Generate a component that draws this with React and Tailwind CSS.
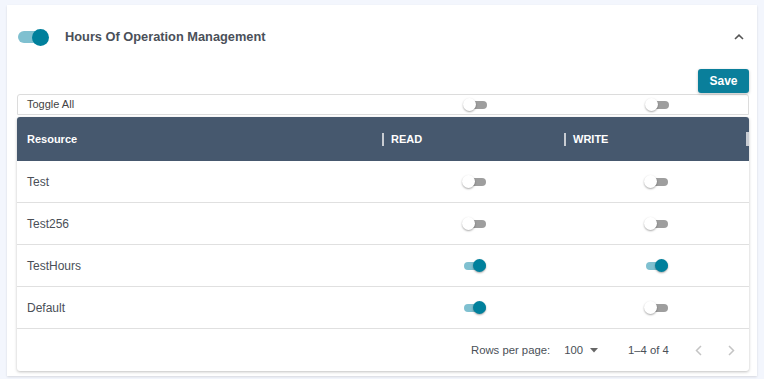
import React, { useState } from "react";

const rows = [
  { name: "Test", read: false, write: false },
  { name: "Test256", read: false, write: false },
  { name: "TestHours", read: true, write: true },
  { name: "Default", read: true, write: false },
];

function MiniSwitch({ on }) {
  return (
    <span className="relative inline-block w-[24px] h-[13px]">
      <span
        className={`absolute left-[2px] right-0 top-[2.5px] h-[8px] rounded-full ${
          on ? "bg-[#7fc0d0]" : "bg-[#9e9e9e]"
        }`}
      ></span>
      <span
        className={`absolute top-0 w-[13px] h-[13px] rounded-full shadow-[0_1px_2px_rgba(0,0,0,0.35)] ${
          on ? "right-0 bg-[#00809c]" : "left-0 bg-white"
        }`}
      ></span>
    </span>
  );
}

export default function App() {
  const [enabled] = useState(true);

  return (
    <div className="w-[764px] h-[379px] bg-[#f3f6fd] pt-[5px] pl-[7px] font-['Liberation_Sans',Arial,sans-serif]">
      <div className="w-[750px] h-[371px] bg-white shadow-[0_1px_2px_rgba(0,0,0,0.12)] pl-[10px] pr-[8px] pb-[5px]">
        {/* Header */}
        <div className="flex items-center h-[64px]">
          <span className="relative inline-block w-[31px] h-[17px] ml-[1px]">
            <span className="absolute left-0 right-[3px] top-[2.5px] h-[12px] rounded-full bg-[#7fc0d0]"></span>
            <span className="absolute right-0 top-0 w-[17px] h-[17px] rounded-full bg-[#00809c]"></span>
          </span>
          <h2 className="ml-[16px] text-[12.8px] font-bold text-[#4a5059]">
            Hours Of Operation Management
          </h2>
          <svg className="ml-auto mr-[5px]" width="10" height="6" viewBox="0 0 10 6">
            <polyline points="1,5 5,1.2 9,5" fill="none" stroke="#555" strokeWidth="1.6" />
          </svg>
        </div>

        {/* Save */}
        <div className="flex justify-end h-[25px]">
          <button className="w-[51px] h-[24px] bg-[#0a7f9b] text-white text-[12px] font-bold rounded-[3px] shadow-[0_1px_3px_rgba(0,0,0,0.25)]">
            Save
          </button>
        </div>

        {/* Toggle all row */}
        <div className="flex items-center h-[21px] border border-[#dcdcdc] rounded-t-[3px] text-[11px] text-[#444]">
          <span className="w-[364px] pl-[9px]">Toggle All</span>
          <span className="w-[182px] flex justify-center pl-[4px]"><MiniSwitch on={false} /></span>
          <span className="w-[182px] flex justify-center pl-[4px]"><MiniSwitch on={false} /></span>
        </div>

        {/* Table */}
        <div className="mt-[2px] rounded-[3px] shadow-[0_1px_3px_rgba(0,0,0,0.25)] overflow-hidden">
          <div className="flex items-center h-[44px] bg-[#46586e] text-white text-[11px] font-bold">
            <span className="w-[365px] pl-[10px]">Resource</span>
            <span className="w-[182px] flex items-center gap-[7px]">
              <span className="w-[2px] h-[13px] bg-[#c8ccd2]"></span>READ
            </span>
            <span className="w-[182px] flex items-center gap-[7px]">
              <span className="w-[2px] h-[13px] bg-[#c8ccd2]"></span>WRITE
            </span>
            <span className="w-[3px] h-[14px] bg-[#c8ccd2]"></span>
          </div>
          {rows.map((r) => (
            <div
              key={r.name}
              className="flex items-center h-[42px] border-b border-[#e0e0e0] text-[12px] text-[#4a4f57]"
            >
              <span className="w-[364px] pl-[10px]">{r.name}</span>
              <span className="w-[182px] flex justify-center pl-[4px]"><MiniSwitch on={r.read} /></span>
              <span className="w-[182px] flex justify-center pl-[4px]"><MiniSwitch on={r.write} /></span>
            </div>
          ))}
          <div className="flex items-center h-[42px] text-[11.3px] text-[#4a4f57] whitespace-nowrap">
            <span className="ml-[454px] shrink-0">Rows per page:</span>
            <span className="ml-[14px] shrink-0">100</span>
            <svg className="ml-[7px] shrink-0" width="8" height="5" viewBox="0 0 8 5">
              <polygon points="0,0 8,0 4,4.5" fill="#666" />
            </svg>
            <span className="ml-[30px] shrink-0">1–4 of 4</span>
            <svg className="ml-[26px] shrink-0" width="7" height="11" viewBox="0 0 7 11">
              <polyline points="6,1 1.5,5.5 6,10" fill="none" stroke="#c4c4c4" strokeWidth="1.5" />
            </svg>
            <svg className="ml-[26px] shrink-0" width="7" height="11" viewBox="0 0 7 11">
              <polyline points="1,1 5.5,5.5 1,10" fill="none" stroke="#c4c4c4" strokeWidth="1.5" />
            </svg>
          </div>
        </div>
      </div>
    </div>
  );
}
